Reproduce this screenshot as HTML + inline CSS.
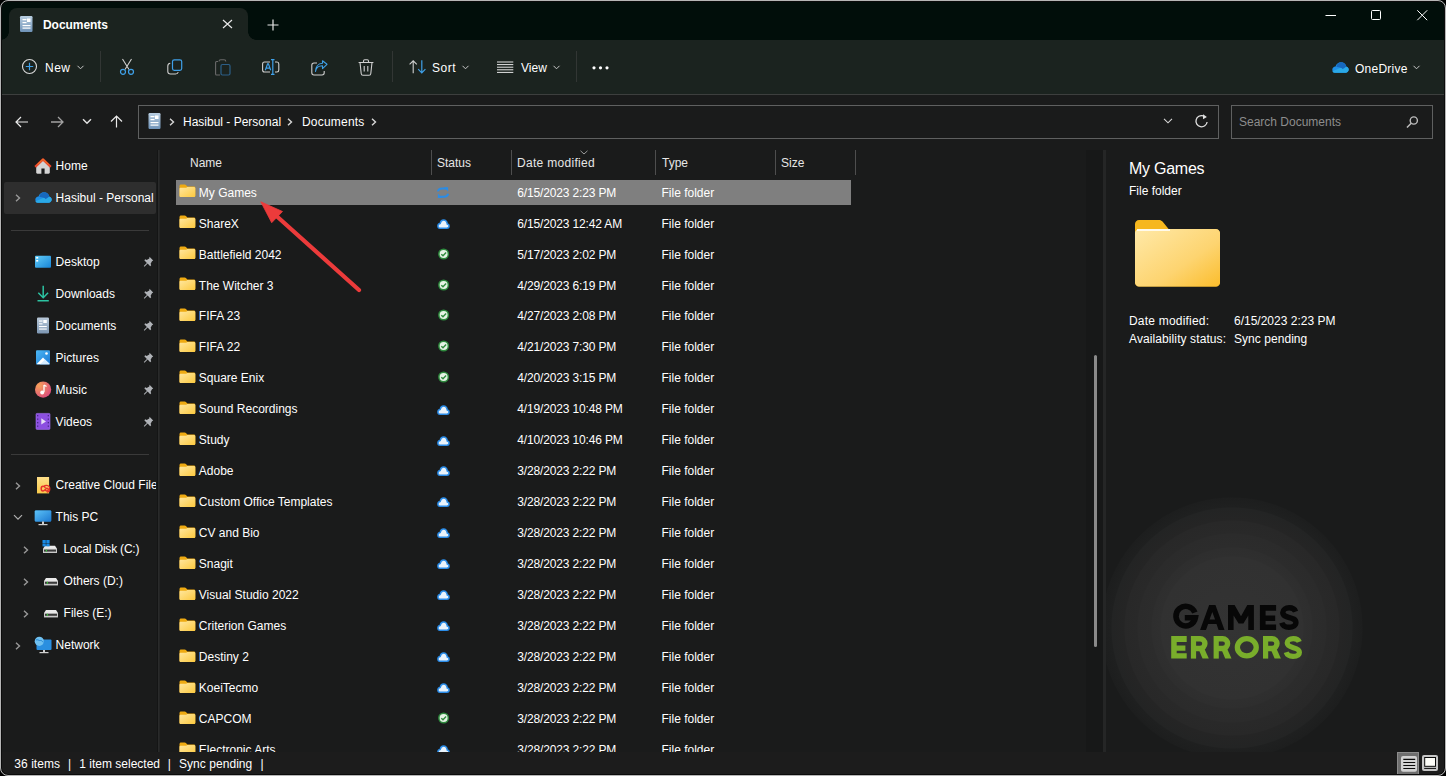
<!DOCTYPE html>
<html><head><meta charset="utf-8">
<style>
*{box-sizing:border-box;margin:0;padding:0}
html,body{width:1446px;height:776px;overflow:hidden;background:#000}
body{font-family:"Liberation Sans",sans-serif;font-size:12px;color:#fff;position:relative}
.a{position:absolute}
.t{position:absolute;white-space:nowrap;line-height:14px;font-size:12px;letter-spacing:0;color:#fff}
svg{position:absolute;overflow:visible}
#win{position:absolute;left:0;top:0;width:1446px;height:776px;border-radius:8px;overflow:hidden;background:#1a1b1b}
#bd{position:absolute;left:0;top:0;width:1446px;height:776px;border-radius:8px;border:1px solid #b6b6b6;box-shadow:inset 0 0 0 1px #0b0b0b;pointer-events:none}
</style></head><body>
<div id="win">

<div class="a" style="left:0;top:0;width:1445px;height:40px;background:#010e0a"></div>
<div class="a" style="left:9px;top:8px;width:239px;height:33px;background:#1b231f;border-radius:8px 8px 0 0"></div>
<div class="a" style="left:1px;top:32px;width:8px;height:8px;background:radial-gradient(circle at 0 0,#010e0a 7.5px,#1b231f 8px)"></div>
<div class="a" style="left:248px;top:32px;width:8px;height:8px;background:radial-gradient(circle at 100% 0,#010e0a 7.5px,#1b231f 8px)"></div>
<svg style="left:20px;top:16px" width="13" height="16" viewBox="0 0 13 16"><defs><linearGradient id="dg" x1="0" y1="0" x2="0" y2="1"><stop offset="0" stop-color="#b8cde0"/><stop offset="1" stop-color="#6f93b8"/></linearGradient></defs><rect x="0" y="0" width="12.5" height="16" rx="1.2" fill="url(#dg)"/><rect x="2.5" y="3" width="4" height="1.2" fill="#fff"/><rect x="7" y="2.5" width="3.5" height="3.5" fill="#fff"/><rect x="2.5" y="6" width="4" height="1.2" fill="#fff"/><rect x="2.5" y="9" width="8" height="1.2" fill="#fff"/><rect x="2.5" y="11.5" width="8" height="1.2" fill="#fff"/></svg>
<div class="t" style="left:43px;top:18px;font-weight:bold;letter-spacing:-0.05px">Documents</div>
<svg style="left:222px;top:19px" width="11" height="10" viewBox="0 0 11 10"><path d="M1 1L10 9M10 1L1 9" stroke="#e8e8e8" stroke-width="1.2"/></svg>
<svg style="left:267px;top:19px" width="12" height="12" viewBox="0 0 12 12"><path d="M6 0.5V11.5M0.5 6H11.5" stroke="#e8e8e8" stroke-width="1.2"/></svg>
<svg style="left:1325px;top:15px" width="12" height="2" viewBox="0 0 12 2"><path d="M0.5 0.5H11" stroke="#fff" stroke-width="1"/></svg>
<svg style="left:1371px;top:10px" width="11" height="11" viewBox="0 0 11 11"><rect x="0.5" y="0.5" width="9" height="9" rx="1" fill="none" stroke="#fff" stroke-width="1"/></svg>
<svg style="left:1417px;top:10px" width="11" height="11" viewBox="0 0 11 11"><path d="M0.3 0.3L10.2 10.2M10.2 0.3L0.3 10.2" stroke="#fff" stroke-width="1"/></svg>
<div class="a" style="left:0;top:40px;width:1445px;height:54px;background:#1b231f"></div>
<div class="a" style="left:0;top:94px;width:1445px;height:1px;background:#3d3f3e"></div>
<svg style="left:21px;top:58px" width="17" height="17" viewBox="0 0 17 17"><circle cx="8.5" cy="8.5" r="7" fill="none" stroke="#dadada" stroke-width="1.1"/><path d="M8.5 4.8V12.2M4.8 8.5H12.2" stroke="#3fa0e8" stroke-width="1.2"/></svg>
<div class="t" style="left:45px;top:61px;letter-spacing:0.5px">New</div>
<svg style="left:77px;top:65px" width="7" height="5" viewBox="0 0 7 5"><path d="M0.5 0.8L3.5 3.8L6.5 0.8" fill="none" stroke="#c8c8c8" stroke-width="1"/></svg>
<div class="a" style="left:100px;top:51px;width:1px;height:31px;background:#323634"></div>
<svg style="left:119px;top:58px" width="16" height="17" viewBox="0 0 16 17"><path d="M3.5 1L10 11.5M12.5 1L6 11.5" stroke="#cfcfcf" stroke-width="1.1" fill="none"/><circle cx="4" cy="13.8" r="2.5" fill="none" stroke="#3fa0e8" stroke-width="1.2"/><circle cx="12" cy="13.8" r="2.5" fill="none" stroke="#3fa0e8" stroke-width="1.2"/></svg>
<svg style="left:167px;top:59px" width="16" height="16" viewBox="0 0 16 16"><rect x="5.5" y="0.8" width="9.2" height="10.5" rx="1.8" fill="none" stroke="#3fa0e8" stroke-width="1.2"/><path d="M3.3 4.2C1.8 4.4 0.8 5.4 0.8 7V12.5C0.8 14 2 15 3.5 15H8.5C10 15 11 14.2 11.2 13" fill="none" stroke="#cfcfcf" stroke-width="1.1"/></svg>
<svg style="left:215px;top:59px" width="16" height="17" viewBox="0 0 16 17"><path d="M3 2.5H1.5C1 2.5 0.6 3 0.6 3.5V15C0.6 15.6 1 16 1.5 16H5" fill="none" stroke="#6a6a6a" stroke-width="1.1"/><path d="M4 2.5C4 1.5 4.8 0.8 5.8 0.8H9C10 0.8 10.8 1.5 10.8 2.5" fill="none" stroke="#6a6a6a" stroke-width="1.1"/><rect x="6" y="5.5" width="9" height="10.5" rx="1.5" fill="none" stroke="#2c5f88" stroke-width="1.2"/></svg>
<svg style="left:262px;top:59px" width="18" height="17" viewBox="0 0 18 17"><path d="M8 3H2.5C1.5 3 0.6 3.8 0.6 5V11C0.6 12.2 1.5 13 2.5 13H8M13 3H15C16 3 16.8 3.8 16.8 5V11C16.8 12.2 16 13 15 13H13" fill="none" stroke="#cfcfcf" stroke-width="1.1"/><path d="M9 0.6H12.5M10.8 0.6V15.4M9 15.4H12.5" stroke="#3fa0e8" stroke-width="1.2"/><path d="M3.3 11.3L5.6 4.8H6.4L8.7 11.3M4.2 9.2H7.8" fill="none" stroke="#3fa0e8" stroke-width="1.2"/></svg>
<svg style="left:310.5px;top:59.8px" width="17" height="16" viewBox="0 0 17 16"><path d="M6 3H3C1.8 3 0.8 4 0.8 5.2V12.8C0.8 14 1.8 15 3 15H11C12.2 15 13.2 14 13.2 12.8V11" fill="none" stroke="#cfcfcf" stroke-width="1.1"/><path d="M4.5 11.5C5 8 7.5 5.8 11.5 5.8V8.6L16 4.3L11.5 0.8V3.3C7 3.5 4.5 7 4.5 11.5Z" fill="none" stroke="#3fa0e8" stroke-width="1.1" stroke-linejoin="round"/></svg>
<svg style="left:358px;top:59px" width="16" height="17" viewBox="0 0 16 17"><path d="M0.6 3.5H15.4M5.5 3.5V2C5.5 1.3 6 0.8 6.7 0.8H9.3C10 0.8 10.5 1.3 10.5 2V3.5" fill="none" stroke="#cfcfcf" stroke-width="1.1"/><path d="M2 3.5L3.2 14.5C3.3 15.5 4 16.2 5 16.2H11C12 16.2 12.7 15.5 12.8 14.5L14 3.5" fill="none" stroke="#cfcfcf" stroke-width="1.1"/><path d="M6.2 7V12.5M9.8 7V12.5" stroke="#cfcfcf" stroke-width="1.1"/></svg>
<div class="a" style="left:392px;top:51px;width:1px;height:31px;background:#323634"></div>
<svg style="left:408.5px;top:60px" width="18" height="14" viewBox="0 0 18 14"><path d="M4.2 13.3V0.8M0.6 4.4L4.2 0.8L7.8 4.4" fill="none" stroke="#cfcfcf" stroke-width="1.1"/><path d="M12.8 0.3V12.8M9.2 9.2L12.8 12.8L16.4 9.2" fill="none" stroke="#3fa0e8" stroke-width="1.2"/></svg>
<div class="t" style="left:432px;top:61px;letter-spacing:0.5px">Sort</div>
<svg style="left:462px;top:65px" width="7" height="5" viewBox="0 0 7 5"><path d="M0.5 0.8L3.5 3.8L6.5 0.8" fill="none" stroke="#c8c8c8" stroke-width="1"/></svg>
<svg style="left:497px;top:61px" width="17" height="12" viewBox="0 0 17 12"><path d="M0 1H16.3M0 3.6H16.3M0 6.2H16.3M0 8.8H16.3M0 11.4H16.3" stroke="#e6e6e6" stroke-width="1"/></svg>
<div class="t" style="left:521px;top:61px;">View</div>
<svg style="left:553px;top:65px" width="7" height="5" viewBox="0 0 7 5"><path d="M0.5 0.8L3.5 3.8L6.5 0.8" fill="none" stroke="#c8c8c8" stroke-width="1"/></svg>
<div class="a" style="left:576px;top:51px;width:1px;height:31px;background:#323634"></div>
<svg style="left:592px;top:66px" width="18" height="4" viewBox="0 0 18 4"><circle cx="2" cy="1.8" r="1.6" fill="#fff"/><circle cx="8.5" cy="1.8" r="1.6" fill="#fff"/><circle cx="15" cy="1.8" r="1.6" fill="#fff"/></svg>
<svg style="left:1331.5px;top:61.5px" width="18" height="12" viewBox="0 0 18 12"><path d="M3.2 10.8C1.6 10.8 0.3 9.5 0.3 7.8C0.3 6 1.7 4.6 3.5 4.5C4.2 2 6.4 0.3 9 0.3C11.8 0.3 14 2.2 14.5 4.8C15.8 5.1 16.7 6.2 16.7 7.6C16.7 9.4 15.3 10.8 13.6 10.8Z" fill="#1f8fe6"/><path d="M4.2 4.6C5 2.1 6.9 0.3 9.2 0.3C11.6 0.3 13.6 2 14.3 4.6L10.6 7.2C9.5 6 8 5.3 6.5 5.3C5.7 5.3 4.9 5 4.2 4.6Z" fill="#1768bd"/><path d="M3 10.8C1.8 10.8 0.8 10.2 0.5 9.2L7.5 6.2C8.8 5.8 10 6.3 10.8 7.2L14.3 4.7C15.8 5 16.7 6.2 16.7 7.6C16.7 9.4 15.3 10.8 13.6 10.8Z" fill="#2aa9e6"/></svg>
<div class="t" style="left:1355px;top:61.5px;letter-spacing:0.25px">OneDrive</div>
<svg style="left:1413px;top:65px" width="7" height="5" viewBox="0 0 7 5"><path d="M0.5 0.8L3.5 3.8L6.5 0.8" fill="none" stroke="#c8c8c8" stroke-width="1"/></svg>
<div class="a" style="left:138px;top:105px;width:1081px;height:34px;border:1px solid #5f6060"></div>
<div class="a" style="left:1231px;top:105px;width:202px;height:34px;border:1px solid #5f6060"></div>
<svg style="left:15px;top:116px" width="14" height="12" viewBox="0 0 14 12"><path d="M13 6H1.2M6 1L1 6L6 11" fill="none" stroke="#eaeaea" stroke-width="1.2"/></svg>
<svg style="left:50px;top:116px" width="14" height="12" viewBox="0 0 14 12"><path d="M1 6H12.8M8 1L13 6L8 11" fill="none" stroke="#a2a2a2" stroke-width="1.3"/></svg>
<svg style="left:82px;top:118px" width="10" height="7" viewBox="0 0 10 7"><path d="M1 1.2L5 5.2L9 1.2" fill="none" stroke="#e0e0e0" stroke-width="1.5"/></svg>
<svg style="left:110px;top:115px" width="13" height="13" viewBox="0 0 13 13"><path d="M6.5 12.5V1.2M1 6.5L6.5 1L12 6.5" fill="none" stroke="#eaeaea" stroke-width="1.2"/></svg>
<svg style="left:148px;top:113px" width="13" height="16" viewBox="0 0 13 16"><defs><linearGradient id="dg2" x1="0" y1="0" x2="0" y2="1"><stop offset="0" stop-color="#b8cde0"/><stop offset="1" stop-color="#6f93b8"/></linearGradient></defs><rect x="0.5" y="0" width="12" height="16" rx="1.2" fill="url(#dg2)"/><rect x="2.5" y="3" width="4" height="1.2" fill="#fff"/><rect x="7" y="2.5" width="3.5" height="3.5" fill="#fff"/><rect x="2.5" y="6" width="4" height="1.2" fill="#fff"/><rect x="2.5" y="9" width="8" height="1.2" fill="#fff"/><rect x="2.5" y="11.5" width="8" height="1.2" fill="#fff"/></svg>
<svg style="left:169px;top:118px" width="6" height="8" viewBox="0 0 6 8"><path d="M1 0.8L4.5 4L1 7.2" fill="none" stroke="#d8d8d8" stroke-width="1.4"/></svg>
<div class="t" style="left:183px;top:115px;">Hasibul - Personal</div>
<svg style="left:287px;top:118px" width="6" height="8" viewBox="0 0 6 8"><path d="M1 0.8L4.5 4L1 7.2" fill="none" stroke="#d8d8d8" stroke-width="1.4"/></svg>
<div class="t" style="left:302px;top:115px;letter-spacing:0.2px">Documents</div>
<svg style="left:371px;top:118px" width="6" height="8" viewBox="0 0 6 8"><path d="M1 0.8L4.5 4L1 7.2" fill="none" stroke="#d8d8d8" stroke-width="1.4"/></svg>
<svg style="left:1163px;top:118px" width="10" height="6" viewBox="0 0 10 6"><path d="M1 0.8L5 4.8L9 0.8" fill="none" stroke="#d8d8d8" stroke-width="1.1"/></svg>
<svg style="left:1194px;top:114px" width="14" height="14" viewBox="0 0 14 14"><path d="M13.1 8A5.6 5.6 0 1 1 9.3 1.9" fill="none" stroke="#e2e2e2" stroke-width="1.3"/><path d="M9 0.2L12.9 3L9 5.2Z" fill="#e2e2e2"/></svg>
<div class="t" style="left:1239px;top:115px;color:#8d8d8d">Search Documents</div>
<svg style="left:1406px;top:115px" width="12" height="14" viewBox="0 0 12 14"><circle cx="7.8" cy="5.5" r="3.6" fill="none" stroke="#bdbdbd" stroke-width="1.4"/><path d="M5.2 8.2L1 12.5" stroke="#bdbdbd" stroke-width="1.5"/></svg>
<div class="a" style="left:157px;top:150px;width:1px;height:602px;background:#141515"></div>
<div class="a" style="left:158px;top:150px;width:1px;height:602px;background:#292a2a"></div>
<div class="a" style="left:159px;top:150px;width:1px;height:602px;background:#232424"></div>
<div class="a" style="left:3.5px;top:182px;width:152.5px;height:31.5px;background:#2e2e2e;border-radius:2px"></div>
<svg style="left:34px;top:157px" width="18" height="18" viewBox="0 0 18 18"><path d="M2.2 9.3L9 3L15.8 9.3V15.6C15.8 16.3 15.3 16.8 14.6 16.8H10.6V11.6H7.4V16.8H3.4C2.7 16.8 2.2 16.3 2.2 15.6Z" fill="#d4d4d4"/><path d="M1.2 9.9L9 2.4L16.8 9.9" fill="none" stroke="#e9482c" stroke-width="2.3" stroke-linejoin="round"/><path d="M3.5 7.4L9 2.3L14.5 7.4" fill="none" stroke="#f6a21c" stroke-width="0.7" opacity="0.8"/></svg>
<div class="t" style="left:55.6px;top:159px;">Home</div>
<svg style="left:15px;top:194px" width="6" height="8" viewBox="0 0 6 8"><path d="M1 0.8L4.5 4L1 7.2" fill="none" stroke="#9a9a9a" stroke-width="1.4"/></svg>
<svg style="left:34.5px;top:192px" width="17" height="12" viewBox="0 0 17 12"><path d="M3.2 10.8C1.6 10.8 0.3 9.5 0.3 7.8C0.3 6 1.7 4.6 3.5 4.5C4.2 2 6.4 0.3 9 0.3C11.8 0.3 14 2.2 14.5 4.8C15.8 5.1 16.7 6.2 16.7 7.6C16.7 9.4 15.3 10.8 13.6 10.8Z" fill="#1f8fe6"/><path d="M4.2 4.6C5 2.1 6.9 0.3 9.2 0.3C11.6 0.3 13.6 2 14.3 4.6L10.6 7.2C9.5 6 8 5.3 6.5 5.3C5.7 5.3 4.9 5 4.2 4.6Z" fill="#1768bd"/><path d="M3 10.8C1.8 10.8 0.8 10.2 0.5 9.2L7.5 6.2C8.8 5.8 10 6.3 10.8 7.2L14.3 4.7C15.8 5 16.7 6.2 16.7 7.6C16.7 9.4 15.3 10.8 13.6 10.8Z" fill="#2aa9e6"/></svg>
<div class="t" style="left:55.6px;top:191px;">Hasibul - Personal</div>
<div class="a" style="left:11px;top:230px;width:138px;height:1px;background:#3a3a3a"></div>
<svg style="left:34px;top:253px" width="18" height="18" viewBox="0 0 18 18"><defs><linearGradient id="dkg" x1="0" y1="0" x2="1" y2="1"><stop offset="0" stop-color="#62cdf9"/><stop offset="1" stop-color="#1784d6"/></linearGradient></defs><rect x="1" y="2.7" width="16" height="12" rx="1" fill="url(#dkg)"/><rect x="2.2" y="4" width="2" height="1.6" fill="#fff"/><rect x="2.2" y="7" width="2" height="1.6" fill="#fff"/></svg>
<div class="t" style="left:55.6px;top:255px;">Desktop</div>
<svg style="left:143px;top:256px" width="11" height="11" viewBox="0 0 11 11"><path d="M6.5 0.8L10.2 4.5L9 5.2L7.6 7.8L8.2 9.2L7.2 10.2L4.6 7.6L1.5 10.7L0.8 10L3.9 6.9L1.3 4.3L2.3 3.3L3.7 3.9L6.3 2.5Z" fill="#b0b3b8"/></svg>
<svg style="left:34px;top:285px" width="18" height="18" viewBox="0 0 18 18"><path d="M9.2 0.7V12.5M4.3 7.8L9.2 12.7L14.1 7.8" fill="none" stroke="#2cc3a2" stroke-width="1.5"/><rect x="3.5" y="15" width="11.3" height="1.5" fill="#2cc3a2"/></svg>
<div class="t" style="left:55.6px;top:287px;">Downloads</div>
<svg style="left:143px;top:288px" width="11" height="11" viewBox="0 0 11 11"><path d="M6.5 0.8L10.2 4.5L9 5.2L7.6 7.8L8.2 9.2L7.2 10.2L4.6 7.6L1.5 10.7L0.8 10L3.9 6.9L1.3 4.3L2.3 3.3L3.7 3.9L6.3 2.5Z" fill="#b0b3b8"/></svg>
<svg style="left:34px;top:317px" width="18" height="18" viewBox="0 0 18 18"><defs><linearGradient id="dcg" x1="0" y1="0" x2="0" y2="1"><stop offset="0" stop-color="#b9c9d9"/><stop offset="1" stop-color="#7d97b3"/></linearGradient></defs><rect x="3" y="0.4" width="12" height="16" rx="1.2" fill="url(#dcg)"/><rect x="5" y="3.5" width="3.5" height="1.1" fill="#fff"/><rect x="9.3" y="3" width="3.5" height="3" fill="#fff"/><rect x="5" y="6.3" width="3.5" height="1.1" fill="#fff"/><rect x="5" y="9" width="7.8" height="1.1" fill="#fff"/><rect x="5" y="11.5" width="7.8" height="1.1" fill="#fff"/></svg>
<div class="t" style="left:55.6px;top:319px;">Documents</div>
<svg style="left:143px;top:320px" width="11" height="11" viewBox="0 0 11 11"><path d="M6.5 0.8L10.2 4.5L9 5.2L7.6 7.8L8.2 9.2L7.2 10.2L4.6 7.6L1.5 10.7L0.8 10L3.9 6.9L1.3 4.3L2.3 3.3L3.7 3.9L6.3 2.5Z" fill="#b0b3b8"/></svg>
<svg style="left:34px;top:349px" width="18" height="18" viewBox="0 0 18 18"><defs><linearGradient id="pg" x1="0" y1="0" x2="1" y2="1"><stop offset="0" stop-color="#4cb8f5"/><stop offset="1" stop-color="#1a78d4"/></linearGradient></defs><rect x="2" y="1.3" width="14" height="14.2" rx="1" fill="url(#pg)"/><path d="M2.5 15.2L9 8.5L15.5 15.2Z" fill="#fff"/><path d="M6 15.2L11 10.5L15.5 14.5V15.2Z" fill="#d5ecff"/><circle cx="12.5" cy="4.5" r="1.3" fill="#fff"/></svg>
<div class="t" style="left:55.6px;top:351px;">Pictures</div>
<svg style="left:143px;top:352px" width="11" height="11" viewBox="0 0 11 11"><path d="M6.5 0.8L10.2 4.5L9 5.2L7.6 7.8L8.2 9.2L7.2 10.2L4.6 7.6L1.5 10.7L0.8 10L3.9 6.9L1.3 4.3L2.3 3.3L3.7 3.9L6.3 2.5Z" fill="#b0b3b8"/></svg>
<svg style="left:34px;top:381px" width="18" height="18" viewBox="0 0 18 18"><defs><radialGradient id="mg" cx="0.25" cy="0.25" r="0.9"><stop offset="0" stop-color="#f7a25a"/><stop offset="1" stop-color="#d9477e"/></radialGradient></defs><circle cx="9.1" cy="8.6" r="8.1" fill="url(#mg)"/><path d="M10 4V11" stroke="#fff" stroke-width="1.3"/><circle cx="8.2" cy="11.5" r="2" fill="#fff"/><path d="M10 4L12.5 5.5" stroke="#fff" stroke-width="1.3"/></svg>
<div class="t" style="left:55.6px;top:383px;">Music</div>
<svg style="left:143px;top:384px" width="11" height="11" viewBox="0 0 11 11"><path d="M6.5 0.8L10.2 4.5L9 5.2L7.6 7.8L8.2 9.2L7.2 10.2L4.6 7.6L1.5 10.7L0.8 10L3.9 6.9L1.3 4.3L2.3 3.3L3.7 3.9L6.3 2.5Z" fill="#b0b3b8"/></svg>
<svg style="left:34px;top:413px" width="18" height="18" viewBox="0 0 18 18"><rect x="2" y="0.4" width="14" height="16" rx="1" fill="#8c4fe0"/><rect x="2" y="0.4" width="14" height="16" rx="1" fill="none" stroke="#a274f0" stroke-width="0.6"/><rect x="3" y="2" width="1.3" height="1.3" fill="#4a2a8a"/><rect x="3" y="5.5" width="1.3" height="1.3" fill="#4a2a8a"/><rect x="3" y="9" width="1.3" height="1.3" fill="#4a2a8a"/><rect x="3" y="12.5" width="1.3" height="1.3" fill="#4a2a8a"/><rect x="13.7" y="2" width="1.3" height="1.3" fill="#4a2a8a"/><rect x="13.7" y="5.5" width="1.3" height="1.3" fill="#4a2a8a"/><rect x="13.7" y="9" width="1.3" height="1.3" fill="#4a2a8a"/><rect x="13.7" y="12.5" width="1.3" height="1.3" fill="#4a2a8a"/><path d="M7.3 5.3V11.5L12 8.4Z" fill="#e8e0f5"/></svg>
<div class="t" style="left:55.6px;top:415px;">Videos</div>
<svg style="left:143px;top:416px" width="11" height="11" viewBox="0 0 11 11"><path d="M6.5 0.8L10.2 4.5L9 5.2L7.6 7.8L8.2 9.2L7.2 10.2L4.6 7.6L1.5 10.7L0.8 10L3.9 6.9L1.3 4.3L2.3 3.3L3.7 3.9L6.3 2.5Z" fill="#b0b3b8"/></svg>
<div class="a" style="left:11px;top:454px;width:138px;height:1px;background:#3a3a3a"></div>
<svg style="left:15px;top:482px" width="6" height="8" viewBox="0 0 6 8"><path d="M1 0.8L4.5 4L1 7.2" fill="none" stroke="#9a9a9a" stroke-width="1.4"/></svg>
<svg style="left:36px;top:476px" width="16" height="18" viewBox="0 0 16 18"><defs><linearGradient id="ccg" x1="0" y1="0" x2="0" y2="1"><stop offset="0" stop-color="#ffe08a"/><stop offset="1" stop-color="#f9c94a"/></linearGradient></defs><rect x="1" y="1" width="12.1" height="16.4" fill="url(#ccg)"/><path d="M9.5 11.8C8.5 10.5 7.8 10.3 7 10.3C5.8 10.3 5.2 11.3 5.2 12.7C5.2 14.1 5.9 15 7 15C8.6 15 9.8 12.3 11 12.3C11.7 12.3 12.3 12.8 12.3 13.6C12.3 14.4 11.7 15 11 15C10.3 15 9.8 14.5 9.5 14.2" fill="none" stroke="#e8322a" stroke-width="1.5"/><path d="M8 10.3C8.5 9.6 9.4 9.3 10.3 9.3C12.3 9.3 13.8 10.8 13.8 12.7C13.8 14.6 12.4 16 10.8 16" fill="none" stroke="#e8322a" stroke-width="1.3"/></svg>
<div class="t" style="left:55.6px;top:478.3px;width:100.5px;overflow:hidden">Creative Cloud Files</div>
<svg style="left:13px;top:514px" width="10" height="7" viewBox="0 0 10 7"><path d="M1 1.2L5 5.2L9 1.2" fill="none" stroke="#b0b0b0" stroke-width="1.2"/></svg>
<svg style="left:34px;top:510px" width="18" height="16" viewBox="0 0 18 16"><rect x="0.8" y="0.5" width="16.4" height="11" rx="1" fill="#2a8fe0"/><rect x="0.8" y="0.5" width="16.4" height="11" rx="1" fill="url(#pcg)"/><defs><linearGradient id="pcg" x1="0" y1="0" x2="1" y2="1"><stop offset="0" stop-color="#5cc2f7"/><stop offset="1" stop-color="#1c78d0"/></linearGradient></defs><rect x="8" y="11.5" width="2" height="2.5" fill="#cfcfcf"/><rect x="4.5" y="14" width="9" height="1.2" fill="#cfcfcf"/></svg>
<div class="t" style="left:55.6px;top:510.29999999999995px;">This PC</div>
<svg style="left:23px;top:546px" width="6" height="8" viewBox="0 0 6 8"><path d="M1 0.8L4.5 4L1 7.2" fill="none" stroke="#9a9a9a" stroke-width="1.4"/></svg>
<svg style="left:42px;top:540px" width="16" height="14" viewBox="0 0 16 14"><g transform="translate(0,3.8)"><path d="M3 1.9H13L15 5V9.2H1V5Z" fill="#e9e9e9"/><rect x="1" y="5" width="14" height="4.2" fill="#c9c9c9"/><rect x="2" y="5.8" width="12" height="2" fill="#3b3b3b"/><rect x="3.8" y="5.8" width="1.2" height="2" fill="#3cc43c"/></g><rect x="0.5" y="0" width="3.3" height="3" fill="#1a8be6"/><rect x="4.3" y="0" width="3.3" height="3" fill="#1a8be6"/><rect x="0.5" y="3.4" width="3.3" height="3" fill="#1a8be6"/><rect x="4.3" y="3.4" width="3.3" height="3" fill="#1a8be6"/></svg>
<div class="t" style="left:63.599999999999994px;top:542px;letter-spacing:-0.2px">Local Disk (C:)</div>
<svg style="left:23px;top:578px" width="6" height="8" viewBox="0 0 6 8"><path d="M1 0.8L4.5 4L1 7.2" fill="none" stroke="#9a9a9a" stroke-width="1.4"/></svg>
<svg style="left:43px;top:576px" width="16" height="12" viewBox="0 0 16 12"><path d="M3 1.9H13L15 5V9.2H1V5Z" fill="#e9e9e9"/><rect x="1" y="5" width="14" height="4.2" fill="#c9c9c9"/><rect x="2" y="5.8" width="12" height="2" fill="#3b3b3b"/><rect x="3.8" y="5.8" width="1.2" height="2" fill="#3cc43c"/></svg>
<div class="t" style="left:63.599999999999994px;top:574px;">Others (D:)</div>
<svg style="left:23px;top:610px" width="6" height="8" viewBox="0 0 6 8"><path d="M1 0.8L4.5 4L1 7.2" fill="none" stroke="#9a9a9a" stroke-width="1.4"/></svg>
<svg style="left:43px;top:608px" width="16" height="12" viewBox="0 0 16 12"><path d="M3 1.9H13L15 5V9.2H1V5Z" fill="#e9e9e9"/><rect x="1" y="5" width="14" height="4.2" fill="#c9c9c9"/><rect x="2" y="5.8" width="12" height="2" fill="#3b3b3b"/><rect x="3.8" y="5.8" width="1.2" height="2" fill="#3cc43c"/></svg>
<div class="t" style="left:63.599999999999994px;top:606px;">Files (E:)</div>
<svg style="left:15px;top:642px" width="6" height="8" viewBox="0 0 6 8"><path d="M1 0.8L4.5 4L1 7.2" fill="none" stroke="#9a9a9a" stroke-width="1.4"/></svg>
<svg style="left:34px;top:636px" width="18" height="18" viewBox="0 0 18 18"><rect x="2.5" y="3.5" width="15" height="10.5" rx="1" fill="#2a8fe0"/><rect x="9" y="14" width="2" height="2" fill="#cfcfcf"/><rect x="5.5" y="16" width="9" height="1.2" fill="#cfcfcf"/><circle cx="5.3" cy="5.3" r="4.6" fill="#6fc0f0"/><path d="M2 4C3.5 3 5 5 6.5 4.5C8 4 8.5 6.5 9.5 6" fill="none" stroke="#1a7fd0" stroke-width="0.9"/></svg>
<div class="t" style="left:55.6px;top:638px;">Network</div>
<div class="t" style="left:190px;top:156px;color:#e6e6e6;letter-spacing:0px">Name</div>
<div class="t" style="left:437px;top:156px;color:#e6e6e6;letter-spacing:0px">Status</div>
<div class="t" style="left:517px;top:156px;color:#e6e6e6;letter-spacing:0.3px">Date modified</div>
<div class="t" style="left:662px;top:156px;color:#e6e6e6;letter-spacing:0px">Type</div>
<div class="t" style="left:781px;top:156px;color:#e6e6e6;letter-spacing:0px">Size</div>
<div class="a" style="left:431px;top:150px;width:1px;height:25px;background:#4e4e4e"></div>
<div class="a" style="left:511px;top:150px;width:1px;height:25px;background:#4e4e4e"></div>
<div class="a" style="left:655px;top:150px;width:1px;height:25px;background:#4e4e4e"></div>
<div class="a" style="left:775px;top:150px;width:1px;height:25px;background:#4e4e4e"></div>
<div class="a" style="left:855px;top:150px;width:1px;height:25px;background:#4e4e4e"></div>
<svg style="left:580px;top:150px" width="8" height="5" viewBox="0 0 8 5"><path d="M0.5 0.8L4 4L7.5 0.8" fill="none" stroke="#9a9a9a" stroke-width="1"/></svg>
<div class="a" style="left:176px;top:180px;width:675px;height:25px;background:#7f7f7f"></div>
<svg width="0" height="0" style="position:absolute"><defs><linearGradient id="fg" x1="0" y1="0" x2="1" y2="1"><stop offset="0" stop-color="#ffe7a0"/><stop offset="1" stop-color="#fcc93f"/></linearGradient></defs></svg>
<svg style="left:178.5px;top:184.4px" width="16" height="14" viewBox="0 0 16 14"><path d="M0.5 2C0.5 1.1 1.2 0.5 2 0.5H5.6C6.3 0.5 6.8 0.8 7.2 1.3L8.3 2.6H14.9C15.7 2.6 16.3 3.2 16.3 4V11.6C16.3 12.4 15.7 13 14.9 13H1.9C1.1 13 0.5 12.4 0.5 11.6Z" fill="#eeaa12"/><path d="M0.5 5C0.5 4.3 1 3.8 1.7 3.8H7.2L8.3 2.9H15C15.7 2.9 16.3 3.5 16.3 4.2V11.7C16.3 12.4 15.8 13 15.1 13H1.7C1 13 0.5 12.4 0.5 11.7Z" fill="url(#fg)"/></svg>
<div class="t" style="left:198.8px;top:185.6px;">My Games</div>
<svg style="left:437px;top:187.4px" width="12" height="12" viewBox="0 0 12 12"><g id="sy"><path d="M0.9 4.4C1.3 2.3 2.8 1.4 5 1.4H9.5" fill="none" stroke="#2a8ce6" stroke-width="2"/><path d="M7 0.3H11.1V4.6Z" fill="#2a8ce6"/></g><g transform="rotate(180 6 5.6)"><path d="M0.9 4.4C1.3 2.3 2.8 1.4 5 1.4H9.5" fill="none" stroke="#2a8ce6" stroke-width="2"/><path d="M7 0.3H11.1V4.6Z" fill="#2a8ce6"/></g></svg>
<div class="t" style="left:517.3px;top:185.6px;letter-spacing:-0.15px">6/15/2023 2:23 PM</div>
<div class="t" style="left:661.5px;top:185.6px;">File folder</div>
<svg style="left:178.5px;top:215.4px" width="16" height="14" viewBox="0 0 16 14"><path d="M0.5 2C0.5 1.1 1.2 0.5 2 0.5H5.6C6.3 0.5 6.8 0.8 7.2 1.3L8.3 2.6H14.9C15.7 2.6 16.3 3.2 16.3 4V11.6C16.3 12.4 15.7 13 14.9 13H1.9C1.1 13 0.5 12.4 0.5 11.6Z" fill="#eeaa12"/><path d="M0.5 5C0.5 4.3 1 3.8 1.7 3.8H7.2L8.3 2.9H15C15.7 2.9 16.3 3.5 16.3 4.2V11.7C16.3 12.4 15.8 13 15.1 13H1.7C1 13 0.5 12.4 0.5 11.7Z" fill="url(#fg)"/></svg>
<div class="t" style="left:198.8px;top:216.6px;">ShareX</div>
<svg style="left:436.5px;top:218.79999999999998px" width="13" height="10" viewBox="0 0 13 10"><path d="M3 9.2H9.8C11.2 9.2 12.1 8.3 12.1 7.1C12.1 6 11.3 5.1 10.3 5C10 3 8.6 1 6.6 1C4.8 1 3.5 2.5 3.2 4.4C1.8 4.6 0.9 5.7 0.9 6.9C0.9 8.2 1.8 9.2 3 9.2Z" fill="#eaf3fb" stroke="#2a8ce8" stroke-width="1.5"/></svg>
<div class="t" style="left:517.3px;top:216.6px;letter-spacing:-0.15px">6/15/2023 12:42 AM</div>
<div class="t" style="left:661.5px;top:216.6px;">File folder</div>
<svg style="left:178.5px;top:246.3px" width="16" height="14" viewBox="0 0 16 14"><path d="M0.5 2C0.5 1.1 1.2 0.5 2 0.5H5.6C6.3 0.5 6.8 0.8 7.2 1.3L8.3 2.6H14.9C15.7 2.6 16.3 3.2 16.3 4V11.6C16.3 12.4 15.7 13 14.9 13H1.9C1.1 13 0.5 12.4 0.5 11.6Z" fill="#eeaa12"/><path d="M0.5 5C0.5 4.3 1 3.8 1.7 3.8H7.2L8.3 2.9H15C15.7 2.9 16.3 3.5 16.3 4.2V11.7C16.3 12.4 15.8 13 15.1 13H1.7C1 13 0.5 12.4 0.5 11.7Z" fill="url(#fg)"/></svg>
<div class="t" style="left:198.8px;top:247.5px;">Battlefield 2042</div>
<svg style="left:437.5px;top:247.5px" width="12" height="12" viewBox="0 0 12 12"><circle cx="5.6" cy="6" r="5.5" fill="#2f8a3e"/><circle cx="5.6" cy="6" r="4" fill="#e6f2e6"/><path d="M3.3 6.2L5 7.8L8.1 4.6" fill="none" stroke="#2f8a3e" stroke-width="1.4"/></svg>
<div class="t" style="left:517.3px;top:247.5px;letter-spacing:-0.15px">5/17/2023 2:02 PM</div>
<div class="t" style="left:661.5px;top:247.5px;">File folder</div>
<svg style="left:178.5px;top:277.3px" width="16" height="14" viewBox="0 0 16 14"><path d="M0.5 2C0.5 1.1 1.2 0.5 2 0.5H5.6C6.3 0.5 6.8 0.8 7.2 1.3L8.3 2.6H14.9C15.7 2.6 16.3 3.2 16.3 4V11.6C16.3 12.4 15.7 13 14.9 13H1.9C1.1 13 0.5 12.4 0.5 11.6Z" fill="#eeaa12"/><path d="M0.5 5C0.5 4.3 1 3.8 1.7 3.8H7.2L8.3 2.9H15C15.7 2.9 16.3 3.5 16.3 4.2V11.7C16.3 12.4 15.8 13 15.1 13H1.7C1 13 0.5 12.4 0.5 11.7Z" fill="url(#fg)"/></svg>
<div class="t" style="left:198.8px;top:278.5px;">The Witcher 3</div>
<svg style="left:437.5px;top:278.5px" width="12" height="12" viewBox="0 0 12 12"><circle cx="5.6" cy="6" r="5.5" fill="#2f8a3e"/><circle cx="5.6" cy="6" r="4" fill="#e6f2e6"/><path d="M3.3 6.2L5 7.8L8.1 4.6" fill="none" stroke="#2f8a3e" stroke-width="1.4"/></svg>
<div class="t" style="left:517.3px;top:278.5px;letter-spacing:-0.15px">4/29/2023 6:19 PM</div>
<div class="t" style="left:661.5px;top:278.5px;">File folder</div>
<svg style="left:178.5px;top:308.2px" width="16" height="14" viewBox="0 0 16 14"><path d="M0.5 2C0.5 1.1 1.2 0.5 2 0.5H5.6C6.3 0.5 6.8 0.8 7.2 1.3L8.3 2.6H14.9C15.7 2.6 16.3 3.2 16.3 4V11.6C16.3 12.4 15.7 13 14.9 13H1.9C1.1 13 0.5 12.4 0.5 11.6Z" fill="#eeaa12"/><path d="M0.5 5C0.5 4.3 1 3.8 1.7 3.8H7.2L8.3 2.9H15C15.7 2.9 16.3 3.5 16.3 4.2V11.7C16.3 12.4 15.8 13 15.1 13H1.7C1 13 0.5 12.4 0.5 11.7Z" fill="url(#fg)"/></svg>
<div class="t" style="left:198.8px;top:309.4px;">FIFA 23</div>
<svg style="left:437.5px;top:309.4px" width="12" height="12" viewBox="0 0 12 12"><circle cx="5.6" cy="6" r="5.5" fill="#2f8a3e"/><circle cx="5.6" cy="6" r="4" fill="#e6f2e6"/><path d="M3.3 6.2L5 7.8L8.1 4.6" fill="none" stroke="#2f8a3e" stroke-width="1.4"/></svg>
<div class="t" style="left:517.3px;top:309.4px;letter-spacing:-0.15px">4/27/2023 2:08 PM</div>
<div class="t" style="left:661.5px;top:309.4px;">File folder</div>
<svg style="left:178.5px;top:339.2px" width="16" height="14" viewBox="0 0 16 14"><path d="M0.5 2C0.5 1.1 1.2 0.5 2 0.5H5.6C6.3 0.5 6.8 0.8 7.2 1.3L8.3 2.6H14.9C15.7 2.6 16.3 3.2 16.3 4V11.6C16.3 12.4 15.7 13 14.9 13H1.9C1.1 13 0.5 12.4 0.5 11.6Z" fill="#eeaa12"/><path d="M0.5 5C0.5 4.3 1 3.8 1.7 3.8H7.2L8.3 2.9H15C15.7 2.9 16.3 3.5 16.3 4.2V11.7C16.3 12.4 15.8 13 15.1 13H1.7C1 13 0.5 12.4 0.5 11.7Z" fill="url(#fg)"/></svg>
<div class="t" style="left:198.8px;top:340.4px;">FIFA 22</div>
<svg style="left:437.5px;top:340.4px" width="12" height="12" viewBox="0 0 12 12"><circle cx="5.6" cy="6" r="5.5" fill="#2f8a3e"/><circle cx="5.6" cy="6" r="4" fill="#e6f2e6"/><path d="M3.3 6.2L5 7.8L8.1 4.6" fill="none" stroke="#2f8a3e" stroke-width="1.4"/></svg>
<div class="t" style="left:517.3px;top:340.4px;letter-spacing:-0.15px">4/21/2023 7:30 PM</div>
<div class="t" style="left:661.5px;top:340.4px;">File folder</div>
<svg style="left:178.5px;top:370.2px" width="16" height="14" viewBox="0 0 16 14"><path d="M0.5 2C0.5 1.1 1.2 0.5 2 0.5H5.6C6.3 0.5 6.8 0.8 7.2 1.3L8.3 2.6H14.9C15.7 2.6 16.3 3.2 16.3 4V11.6C16.3 12.4 15.7 13 14.9 13H1.9C1.1 13 0.5 12.4 0.5 11.6Z" fill="#eeaa12"/><path d="M0.5 5C0.5 4.3 1 3.8 1.7 3.8H7.2L8.3 2.9H15C15.7 2.9 16.3 3.5 16.3 4.2V11.7C16.3 12.4 15.8 13 15.1 13H1.7C1 13 0.5 12.4 0.5 11.7Z" fill="url(#fg)"/></svg>
<div class="t" style="left:198.8px;top:371.4px;">Square Enix</div>
<svg style="left:437.5px;top:371.4px" width="12" height="12" viewBox="0 0 12 12"><circle cx="5.6" cy="6" r="5.5" fill="#2f8a3e"/><circle cx="5.6" cy="6" r="4" fill="#e6f2e6"/><path d="M3.3 6.2L5 7.8L8.1 4.6" fill="none" stroke="#2f8a3e" stroke-width="1.4"/></svg>
<div class="t" style="left:517.3px;top:371.4px;letter-spacing:-0.15px">4/20/2023 3:15 PM</div>
<div class="t" style="left:661.5px;top:371.4px;">File folder</div>
<svg style="left:178.5px;top:401.1px" width="16" height="14" viewBox="0 0 16 14"><path d="M0.5 2C0.5 1.1 1.2 0.5 2 0.5H5.6C6.3 0.5 6.8 0.8 7.2 1.3L8.3 2.6H14.9C15.7 2.6 16.3 3.2 16.3 4V11.6C16.3 12.4 15.7 13 14.9 13H1.9C1.1 13 0.5 12.4 0.5 11.6Z" fill="#eeaa12"/><path d="M0.5 5C0.5 4.3 1 3.8 1.7 3.8H7.2L8.3 2.9H15C15.7 2.9 16.3 3.5 16.3 4.2V11.7C16.3 12.4 15.8 13 15.1 13H1.7C1 13 0.5 12.4 0.5 11.7Z" fill="url(#fg)"/></svg>
<div class="t" style="left:198.8px;top:402.3px;">Sound Recordings</div>
<svg style="left:436.5px;top:404.5px" width="13" height="10" viewBox="0 0 13 10"><path d="M3 9.2H9.8C11.2 9.2 12.1 8.3 12.1 7.1C12.1 6 11.3 5.1 10.3 5C10 3 8.6 1 6.6 1C4.8 1 3.5 2.5 3.2 4.4C1.8 4.6 0.9 5.7 0.9 6.9C0.9 8.2 1.8 9.2 3 9.2Z" fill="#eaf3fb" stroke="#2a8ce8" stroke-width="1.5"/></svg>
<div class="t" style="left:517.3px;top:402.3px;letter-spacing:-0.15px">4/19/2023 10:48 PM</div>
<div class="t" style="left:661.5px;top:402.3px;">File folder</div>
<svg style="left:178.5px;top:432.1px" width="16" height="14" viewBox="0 0 16 14"><path d="M0.5 2C0.5 1.1 1.2 0.5 2 0.5H5.6C6.3 0.5 6.8 0.8 7.2 1.3L8.3 2.6H14.9C15.7 2.6 16.3 3.2 16.3 4V11.6C16.3 12.4 15.7 13 14.9 13H1.9C1.1 13 0.5 12.4 0.5 11.6Z" fill="#eeaa12"/><path d="M0.5 5C0.5 4.3 1 3.8 1.7 3.8H7.2L8.3 2.9H15C15.7 2.9 16.3 3.5 16.3 4.2V11.7C16.3 12.4 15.8 13 15.1 13H1.7C1 13 0.5 12.4 0.5 11.7Z" fill="url(#fg)"/></svg>
<div class="t" style="left:198.8px;top:433.3px;">Study</div>
<svg style="left:436.5px;top:435.5px" width="13" height="10" viewBox="0 0 13 10"><path d="M3 9.2H9.8C11.2 9.2 12.1 8.3 12.1 7.1C12.1 6 11.3 5.1 10.3 5C10 3 8.6 1 6.6 1C4.8 1 3.5 2.5 3.2 4.4C1.8 4.6 0.9 5.7 0.9 6.9C0.9 8.2 1.8 9.2 3 9.2Z" fill="#eaf3fb" stroke="#2a8ce8" stroke-width="1.5"/></svg>
<div class="t" style="left:517.3px;top:433.3px;letter-spacing:-0.15px">4/10/2023 10:46 PM</div>
<div class="t" style="left:661.5px;top:433.3px;">File folder</div>
<svg style="left:178.5px;top:463.0px" width="16" height="14" viewBox="0 0 16 14"><path d="M0.5 2C0.5 1.1 1.2 0.5 2 0.5H5.6C6.3 0.5 6.8 0.8 7.2 1.3L8.3 2.6H14.9C15.7 2.6 16.3 3.2 16.3 4V11.6C16.3 12.4 15.7 13 14.9 13H1.9C1.1 13 0.5 12.4 0.5 11.6Z" fill="#eeaa12"/><path d="M0.5 5C0.5 4.3 1 3.8 1.7 3.8H7.2L8.3 2.9H15C15.7 2.9 16.3 3.5 16.3 4.2V11.7C16.3 12.4 15.8 13 15.1 13H1.7C1 13 0.5 12.4 0.5 11.7Z" fill="url(#fg)"/></svg>
<div class="t" style="left:198.8px;top:464.2px;">Adobe</div>
<svg style="left:436.5px;top:466.4px" width="13" height="10" viewBox="0 0 13 10"><path d="M3 9.2H9.8C11.2 9.2 12.1 8.3 12.1 7.1C12.1 6 11.3 5.1 10.3 5C10 3 8.6 1 6.6 1C4.8 1 3.5 2.5 3.2 4.4C1.8 4.6 0.9 5.7 0.9 6.9C0.9 8.2 1.8 9.2 3 9.2Z" fill="#eaf3fb" stroke="#2a8ce8" stroke-width="1.5"/></svg>
<div class="t" style="left:517.3px;top:464.2px;letter-spacing:-0.15px">3/28/2023 2:22 PM</div>
<div class="t" style="left:661.5px;top:464.2px;">File folder</div>
<svg style="left:178.5px;top:494.0px" width="16" height="14" viewBox="0 0 16 14"><path d="M0.5 2C0.5 1.1 1.2 0.5 2 0.5H5.6C6.3 0.5 6.8 0.8 7.2 1.3L8.3 2.6H14.9C15.7 2.6 16.3 3.2 16.3 4V11.6C16.3 12.4 15.7 13 14.9 13H1.9C1.1 13 0.5 12.4 0.5 11.6Z" fill="#eeaa12"/><path d="M0.5 5C0.5 4.3 1 3.8 1.7 3.8H7.2L8.3 2.9H15C15.7 2.9 16.3 3.5 16.3 4.2V11.7C16.3 12.4 15.8 13 15.1 13H1.7C1 13 0.5 12.4 0.5 11.7Z" fill="url(#fg)"/></svg>
<div class="t" style="left:198.8px;top:495.2px;">Custom Office Templates</div>
<svg style="left:436.5px;top:497.4px" width="13" height="10" viewBox="0 0 13 10"><path d="M3 9.2H9.8C11.2 9.2 12.1 8.3 12.1 7.1C12.1 6 11.3 5.1 10.3 5C10 3 8.6 1 6.6 1C4.8 1 3.5 2.5 3.2 4.4C1.8 4.6 0.9 5.7 0.9 6.9C0.9 8.2 1.8 9.2 3 9.2Z" fill="#eaf3fb" stroke="#2a8ce8" stroke-width="1.5"/></svg>
<div class="t" style="left:517.3px;top:495.2px;letter-spacing:-0.15px">3/28/2023 2:22 PM</div>
<div class="t" style="left:661.5px;top:495.2px;">File folder</div>
<svg style="left:178.5px;top:525.0px" width="16" height="14" viewBox="0 0 16 14"><path d="M0.5 2C0.5 1.1 1.2 0.5 2 0.5H5.6C6.3 0.5 6.8 0.8 7.2 1.3L8.3 2.6H14.9C15.7 2.6 16.3 3.2 16.3 4V11.6C16.3 12.4 15.7 13 14.9 13H1.9C1.1 13 0.5 12.4 0.5 11.6Z" fill="#eeaa12"/><path d="M0.5 5C0.5 4.3 1 3.8 1.7 3.8H7.2L8.3 2.9H15C15.7 2.9 16.3 3.5 16.3 4.2V11.7C16.3 12.4 15.8 13 15.1 13H1.7C1 13 0.5 12.4 0.5 11.7Z" fill="url(#fg)"/></svg>
<div class="t" style="left:198.8px;top:526.2px;">CV and Bio</div>
<svg style="left:436.5px;top:528.4000000000001px" width="13" height="10" viewBox="0 0 13 10"><path d="M3 9.2H9.8C11.2 9.2 12.1 8.3 12.1 7.1C12.1 6 11.3 5.1 10.3 5C10 3 8.6 1 6.6 1C4.8 1 3.5 2.5 3.2 4.4C1.8 4.6 0.9 5.7 0.9 6.9C0.9 8.2 1.8 9.2 3 9.2Z" fill="#eaf3fb" stroke="#2a8ce8" stroke-width="1.5"/></svg>
<div class="t" style="left:517.3px;top:526.2px;letter-spacing:-0.15px">3/28/2023 2:22 PM</div>
<div class="t" style="left:661.5px;top:526.2px;">File folder</div>
<svg style="left:178.5px;top:555.9px" width="16" height="14" viewBox="0 0 16 14"><path d="M0.5 2C0.5 1.1 1.2 0.5 2 0.5H5.6C6.3 0.5 6.8 0.8 7.2 1.3L8.3 2.6H14.9C15.7 2.6 16.3 3.2 16.3 4V11.6C16.3 12.4 15.7 13 14.9 13H1.9C1.1 13 0.5 12.4 0.5 11.6Z" fill="#eeaa12"/><path d="M0.5 5C0.5 4.3 1 3.8 1.7 3.8H7.2L8.3 2.9H15C15.7 2.9 16.3 3.5 16.3 4.2V11.7C16.3 12.4 15.8 13 15.1 13H1.7C1 13 0.5 12.4 0.5 11.7Z" fill="url(#fg)"/></svg>
<div class="t" style="left:198.8px;top:557.1px;">Snagit</div>
<svg style="left:436.5px;top:559.3000000000001px" width="13" height="10" viewBox="0 0 13 10"><path d="M3 9.2H9.8C11.2 9.2 12.1 8.3 12.1 7.1C12.1 6 11.3 5.1 10.3 5C10 3 8.6 1 6.6 1C4.8 1 3.5 2.5 3.2 4.4C1.8 4.6 0.9 5.7 0.9 6.9C0.9 8.2 1.8 9.2 3 9.2Z" fill="#eaf3fb" stroke="#2a8ce8" stroke-width="1.5"/></svg>
<div class="t" style="left:517.3px;top:557.1px;letter-spacing:-0.15px">3/28/2023 2:22 PM</div>
<div class="t" style="left:661.5px;top:557.1px;">File folder</div>
<svg style="left:178.5px;top:586.9px" width="16" height="14" viewBox="0 0 16 14"><path d="M0.5 2C0.5 1.1 1.2 0.5 2 0.5H5.6C6.3 0.5 6.8 0.8 7.2 1.3L8.3 2.6H14.9C15.7 2.6 16.3 3.2 16.3 4V11.6C16.3 12.4 15.7 13 14.9 13H1.9C1.1 13 0.5 12.4 0.5 11.6Z" fill="#eeaa12"/><path d="M0.5 5C0.5 4.3 1 3.8 1.7 3.8H7.2L8.3 2.9H15C15.7 2.9 16.3 3.5 16.3 4.2V11.7C16.3 12.4 15.8 13 15.1 13H1.7C1 13 0.5 12.4 0.5 11.7Z" fill="url(#fg)"/></svg>
<div class="t" style="left:198.8px;top:588.1px;">Visual Studio 2022</div>
<svg style="left:436.5px;top:590.3000000000001px" width="13" height="10" viewBox="0 0 13 10"><path d="M3 9.2H9.8C11.2 9.2 12.1 8.3 12.1 7.1C12.1 6 11.3 5.1 10.3 5C10 3 8.6 1 6.6 1C4.8 1 3.5 2.5 3.2 4.4C1.8 4.6 0.9 5.7 0.9 6.9C0.9 8.2 1.8 9.2 3 9.2Z" fill="#eaf3fb" stroke="#2a8ce8" stroke-width="1.5"/></svg>
<div class="t" style="left:517.3px;top:588.1px;letter-spacing:-0.15px">3/28/2023 2:22 PM</div>
<div class="t" style="left:661.5px;top:588.1px;">File folder</div>
<svg style="left:178.5px;top:617.8px" width="16" height="14" viewBox="0 0 16 14"><path d="M0.5 2C0.5 1.1 1.2 0.5 2 0.5H5.6C6.3 0.5 6.8 0.8 7.2 1.3L8.3 2.6H14.9C15.7 2.6 16.3 3.2 16.3 4V11.6C16.3 12.4 15.7 13 14.9 13H1.9C1.1 13 0.5 12.4 0.5 11.6Z" fill="#eeaa12"/><path d="M0.5 5C0.5 4.3 1 3.8 1.7 3.8H7.2L8.3 2.9H15C15.7 2.9 16.3 3.5 16.3 4.2V11.7C16.3 12.4 15.8 13 15.1 13H1.7C1 13 0.5 12.4 0.5 11.7Z" fill="url(#fg)"/></svg>
<div class="t" style="left:198.8px;top:619.0px;">Criterion Games</div>
<svg style="left:436.5px;top:621.2px" width="13" height="10" viewBox="0 0 13 10"><path d="M3 9.2H9.8C11.2 9.2 12.1 8.3 12.1 7.1C12.1 6 11.3 5.1 10.3 5C10 3 8.6 1 6.6 1C4.8 1 3.5 2.5 3.2 4.4C1.8 4.6 0.9 5.7 0.9 6.9C0.9 8.2 1.8 9.2 3 9.2Z" fill="#eaf3fb" stroke="#2a8ce8" stroke-width="1.5"/></svg>
<div class="t" style="left:517.3px;top:619.0px;letter-spacing:-0.15px">3/28/2023 2:22 PM</div>
<div class="t" style="left:661.5px;top:619.0px;">File folder</div>
<svg style="left:178.5px;top:648.8px" width="16" height="14" viewBox="0 0 16 14"><path d="M0.5 2C0.5 1.1 1.2 0.5 2 0.5H5.6C6.3 0.5 6.8 0.8 7.2 1.3L8.3 2.6H14.9C15.7 2.6 16.3 3.2 16.3 4V11.6C16.3 12.4 15.7 13 14.9 13H1.9C1.1 13 0.5 12.4 0.5 11.6Z" fill="#eeaa12"/><path d="M0.5 5C0.5 4.3 1 3.8 1.7 3.8H7.2L8.3 2.9H15C15.7 2.9 16.3 3.5 16.3 4.2V11.7C16.3 12.4 15.8 13 15.1 13H1.7C1 13 0.5 12.4 0.5 11.7Z" fill="url(#fg)"/></svg>
<div class="t" style="left:198.8px;top:650.0px;">Destiny 2</div>
<svg style="left:436.5px;top:652.2px" width="13" height="10" viewBox="0 0 13 10"><path d="M3 9.2H9.8C11.2 9.2 12.1 8.3 12.1 7.1C12.1 6 11.3 5.1 10.3 5C10 3 8.6 1 6.6 1C4.8 1 3.5 2.5 3.2 4.4C1.8 4.6 0.9 5.7 0.9 6.9C0.9 8.2 1.8 9.2 3 9.2Z" fill="#eaf3fb" stroke="#2a8ce8" stroke-width="1.5"/></svg>
<div class="t" style="left:517.3px;top:650.0px;letter-spacing:-0.15px">3/28/2023 2:22 PM</div>
<div class="t" style="left:661.5px;top:650.0px;">File folder</div>
<svg style="left:178.5px;top:679.8px" width="16" height="14" viewBox="0 0 16 14"><path d="M0.5 2C0.5 1.1 1.2 0.5 2 0.5H5.6C6.3 0.5 6.8 0.8 7.2 1.3L8.3 2.6H14.9C15.7 2.6 16.3 3.2 16.3 4V11.6C16.3 12.4 15.7 13 14.9 13H1.9C1.1 13 0.5 12.4 0.5 11.6Z" fill="#eeaa12"/><path d="M0.5 5C0.5 4.3 1 3.8 1.7 3.8H7.2L8.3 2.9H15C15.7 2.9 16.3 3.5 16.3 4.2V11.7C16.3 12.4 15.8 13 15.1 13H1.7C1 13 0.5 12.4 0.5 11.7Z" fill="url(#fg)"/></svg>
<div class="t" style="left:198.8px;top:681.0px;">KoeiTecmo</div>
<svg style="left:436.5px;top:683.2px" width="13" height="10" viewBox="0 0 13 10"><path d="M3 9.2H9.8C11.2 9.2 12.1 8.3 12.1 7.1C12.1 6 11.3 5.1 10.3 5C10 3 8.6 1 6.6 1C4.8 1 3.5 2.5 3.2 4.4C1.8 4.6 0.9 5.7 0.9 6.9C0.9 8.2 1.8 9.2 3 9.2Z" fill="#eaf3fb" stroke="#2a8ce8" stroke-width="1.5"/></svg>
<div class="t" style="left:517.3px;top:681.0px;letter-spacing:-0.15px">3/28/2023 2:22 PM</div>
<div class="t" style="left:661.5px;top:681.0px;">File folder</div>
<svg style="left:178.5px;top:710.7px" width="16" height="14" viewBox="0 0 16 14"><path d="M0.5 2C0.5 1.1 1.2 0.5 2 0.5H5.6C6.3 0.5 6.8 0.8 7.2 1.3L8.3 2.6H14.9C15.7 2.6 16.3 3.2 16.3 4V11.6C16.3 12.4 15.7 13 14.9 13H1.9C1.1 13 0.5 12.4 0.5 11.6Z" fill="#eeaa12"/><path d="M0.5 5C0.5 4.3 1 3.8 1.7 3.8H7.2L8.3 2.9H15C15.7 2.9 16.3 3.5 16.3 4.2V11.7C16.3 12.4 15.8 13 15.1 13H1.7C1 13 0.5 12.4 0.5 11.7Z" fill="url(#fg)"/></svg>
<div class="t" style="left:198.8px;top:711.9px;">CAPCOM</div>
<svg style="left:437.5px;top:711.9px" width="12" height="12" viewBox="0 0 12 12"><circle cx="5.6" cy="6" r="5.5" fill="#2f8a3e"/><circle cx="5.6" cy="6" r="4" fill="#e6f2e6"/><path d="M3.3 6.2L5 7.8L8.1 4.6" fill="none" stroke="#2f8a3e" stroke-width="1.4"/></svg>
<div class="t" style="left:517.3px;top:711.9px;letter-spacing:-0.15px">3/28/2023 2:22 PM</div>
<div class="t" style="left:661.5px;top:711.9px;">File folder</div>
<svg style="left:178.5px;top:741.7px" width="16" height="14" viewBox="0 0 16 14"><path d="M0.5 2C0.5 1.1 1.2 0.5 2 0.5H5.6C6.3 0.5 6.8 0.8 7.2 1.3L8.3 2.6H14.9C15.7 2.6 16.3 3.2 16.3 4V11.6C16.3 12.4 15.7 13 14.9 13H1.9C1.1 13 0.5 12.4 0.5 11.6Z" fill="#eeaa12"/><path d="M0.5 5C0.5 4.3 1 3.8 1.7 3.8H7.2L8.3 2.9H15C15.7 2.9 16.3 3.5 16.3 4.2V11.7C16.3 12.4 15.8 13 15.1 13H1.7C1 13 0.5 12.4 0.5 11.7Z" fill="url(#fg)"/></svg>
<div class="t" style="left:198.8px;top:742.9px;">Electronic Arts</div>
<svg style="left:436.5px;top:745.1px" width="13" height="10" viewBox="0 0 13 10"><path d="M3 9.2H9.8C11.2 9.2 12.1 8.3 12.1 7.1C12.1 6 11.3 5.1 10.3 5C10 3 8.6 1 6.6 1C4.8 1 3.5 2.5 3.2 4.4C1.8 4.6 0.9 5.7 0.9 6.9C0.9 8.2 1.8 9.2 3 9.2Z" fill="#eaf3fb" stroke="#2a8ce8" stroke-width="1.5"/></svg>
<div class="t" style="left:517.3px;top:742.9px;letter-spacing:-0.15px">3/28/2023 2:22 PM</div>
<div class="t" style="left:661.5px;top:742.9px;">File folder</div>
<div class="a" style="left:0;top:752px;width:1446px;height:24px;background:#1c1c1c"></div>
<div class="a" style="left:1106px;top:150px;width:339px;height:602px;background:#1a1b1b"></div>
<div class="a" style="left:1106px;top:494px;width:260px;height:258px;background:radial-gradient(circle 131px at 126px 134px,#333333 0px,#313131 71px,#2f2f2f 72px,#2e2e2e 80px,#2c2c2c 81px,#2b2b2b 94px,#292929 95px,#282828 107px,#252525 108px,#232424 120px,#1f2020 121px,#1d1e1e 130px,#1a1b1b 131px)"></div>
<div class="t" style="left:1129px;top:159.0px;font-size:16px;line-height:19px;letter-spacing:-0.25px">My Games</div>
<div class="t" style="left:1129px;top:184px;">File folder</div>
<svg style="left:1135px;top:220px" width="85" height="67" viewBox="0 0 85 67"><defs><linearGradient id="fgl" x1="0" y1="0" x2="1" y2="1"><stop offset="0" stop-color="#ffe9a8"/><stop offset="0.6" stop-color="#fdd470"/><stop offset="1" stop-color="#fbbd2c"/></linearGradient></defs><path d="M0 4C0 1.8 1.8 0 4 0H24C25.5 0 26.5 0.6 27.5 1.6L34 9.5H81C83.2 9.5 85 11.3 85 13.5V62.5C85 64.7 83.2 66.5 81 66.5H4C1.8 66.5 0 64.7 0 62.5Z" fill="#f6b71e"/><path d="M0 13C0 10.8 1.8 9 4 9H81C83.2 9 85 10.8 85 13V62.5C85 64.7 83.2 66.5 81 66.5H4C1.8 66.5 0 64.7 0 62.5Z" fill="url(#fgl)"/><rect x="2" y="9" width="33" height="2" fill="#fff" opacity="0.8"/></svg>
<div class="t" style="left:1129px;top:314px;letter-spacing:0.2px">Date modified:</div>
<div class="t" style="left:1234px;top:314px;">6/15/2023 2:23 PM</div>
<div class="t" style="left:1129px;top:332px;letter-spacing:0.1px">Availability status:</div>
<div class="t" style="left:1234px;top:332px;letter-spacing:0.05px">Sync pending</div>
<div class="a" style="left:1086px;top:150px;width:17px;height:602px;background:#171818"></div>
<div class="a" style="left:1094px;top:355px;width:3px;height:292px;background:#8a8a8a;border-radius:1.5px"></div>
<div class="a" style="left:1103px;top:150px;width:3px;height:602px;background:#252626"></div>
<svg style="position:absolute;left:0;top:0" width="1446" height="776" viewBox="0 0 1446 776"><path d="M1194.9 612.6A9.8 9.8 0 1 0 1195.4 617.8H1184.8" fill="none" stroke="#070707" stroke-width="5.6"/><path fill-rule="evenodd" fill="#070707" d="M1200.1 630L1209.1499999999999 605H1215.45L1224.5 630H1218.6L1216.5 624H1208.1L1206.0 630Z M1209.55 619.6L1212.3 612H1212.3L1215.05 619.6Z"/><path fill="#070707" d="M1228 630V605H1234.6L1241 616.2L1247.3 605H1253.9V630H1248.3V615.5L1243.4 623.6H1238.6L1233.6 615.5V630Z"/><path fill="#070707" d="M1259.9 605H1276.1V610.8H1265.6V615.6H1275.2V620.9H1265.6V624.4H1276.1V630H1259.9Z"/><path d="M1295.6 611.6C1294.6 609 1292.3 607.8 1289.2 607.8C1285.6 607.8 1282.8 609.6 1282.8 612.6C1282.8 619.2 1295.9 616 1295.9 622.6C1295.9 625.6 1293 627.3 1289 627.3C1285.2 627.3 1282.6 625.6 1281.8 622.8" fill="none" stroke="#070707" stroke-width="5.4"/><path fill="#79ad2b" d="M1171.2 636H1186.7V641.9H1176.7V645.4H1185.4V650.7H1176.7V653.2H1186.7V658.6H1171.2Z"/><path fill="#79ad2b" d="M1190.9 636H1196.1000000000001V658.6H1190.9Z"/><path d="M1193.5 638.7H1200.0A4.9 4.9 0 0 1 1200.0 648.5H1193.5" fill="none" stroke="#79ad2b" stroke-width="5.4"/><path fill="#79ad2b" d="M1198.2 648.3H1204.2L1208.8000000000002 658.6H1202.5Z"/><path fill="#79ad2b" d="M1213.6 636H1218.8V658.6H1213.6Z"/><path d="M1216.1999999999998 638.7H1222.6999999999998A4.9 4.9 0 0 1 1222.6999999999998 648.5H1216.1999999999998" fill="none" stroke="#79ad2b" stroke-width="5.4"/><path fill="#79ad2b" d="M1220.8999999999999 648.3H1226.8999999999999L1231.5 658.6H1225.1999999999998Z"/><ellipse cx="1246.8" cy="647.3" rx="9.45" ry="8.6" fill="none" stroke="#79ad2b" stroke-width="5.3"/><path fill="#79ad2b" d="M1263.0 636H1268.2V658.6H1263.0Z"/><path d="M1265.6 638.7H1272.1A4.9 4.9 0 0 1 1272.1 648.5H1265.6" fill="none" stroke="#79ad2b" stroke-width="5.4"/><path fill="#79ad2b" d="M1270.3 648.3H1276.3L1280.9 658.6H1274.6Z"/><path d="M1299.3 641.9C1298.4 639.6 1296.2 638.7 1293.2 638.7C1289.8 638.7 1287.2 640.3 1287.2 643.1C1287.2 649 1299.4 646.3 1299.4 652.2C1299.4 655 1296.7 656.3 1293 656.3C1289.5 656.3 1287 654.8 1286.2 652.3" fill="none" stroke="#79ad2b" stroke-width="5.2"/></svg>
<div class="t" style="left:14.3px;top:757px;letter-spacing:0.05px">36 items</div>
<div class="t" style="left:68px;top:757px;">|</div>
<div class="t" style="left:79.3px;top:757px;letter-spacing:0">1 item selected</div>
<div class="t" style="left:167.7px;top:757px;">|</div>
<div class="t" style="left:179px;top:757px;letter-spacing:0.05px">Sync pending</div>
<div class="t" style="left:260.5px;top:757px;">|</div>
<div class="a" style="left:1397px;top:752px;width:22px;height:23px;background:#6e6e6e;border:1px solid #8c8c8c"></div>
<svg style="left:1401px;top:756px" width="16" height="16" viewBox="0 0 16 16"><rect x="0" y="0" width="16" height="15.8" rx="2" fill="#d2d2d2"/><path d="M2.3 3.4H14.2M2.3 6.5H14.2M2.3 9.5H14.2M2.3 12.5H14.2" stroke="#0a0a0a" stroke-width="1.1"/></svg>
<svg style="left:1422px;top:755px" width="16" height="16" viewBox="0 0 16 16"><rect x="0" y="0" width="16" height="16" rx="2" fill="#c6c6c6"/><rect x="2.2" y="2" width="11.8" height="9.8" fill="#0a0a0a"/><rect x="3.2" y="3" width="9.8" height="7.8" fill="#fdfdf8"/><path d="M2.2 13.4H14" stroke="#0a0a0a" stroke-width="1"/></svg>
<svg style="left:255px;top:196px" width="110" height="100" viewBox="0 0 110 100"><path d="M12 11.5L104 94" stroke="#ec3b3b" stroke-width="4.2" stroke-linecap="round"/><path d="M5.8 5.8L27.5 15.5L16.7 26.7Z" fill="#ec3b3b" stroke="#ec3b3b" stroke-width="0.8" stroke-linejoin="miter"/></svg>
</div><div id="bd"></div>
</body></html>
